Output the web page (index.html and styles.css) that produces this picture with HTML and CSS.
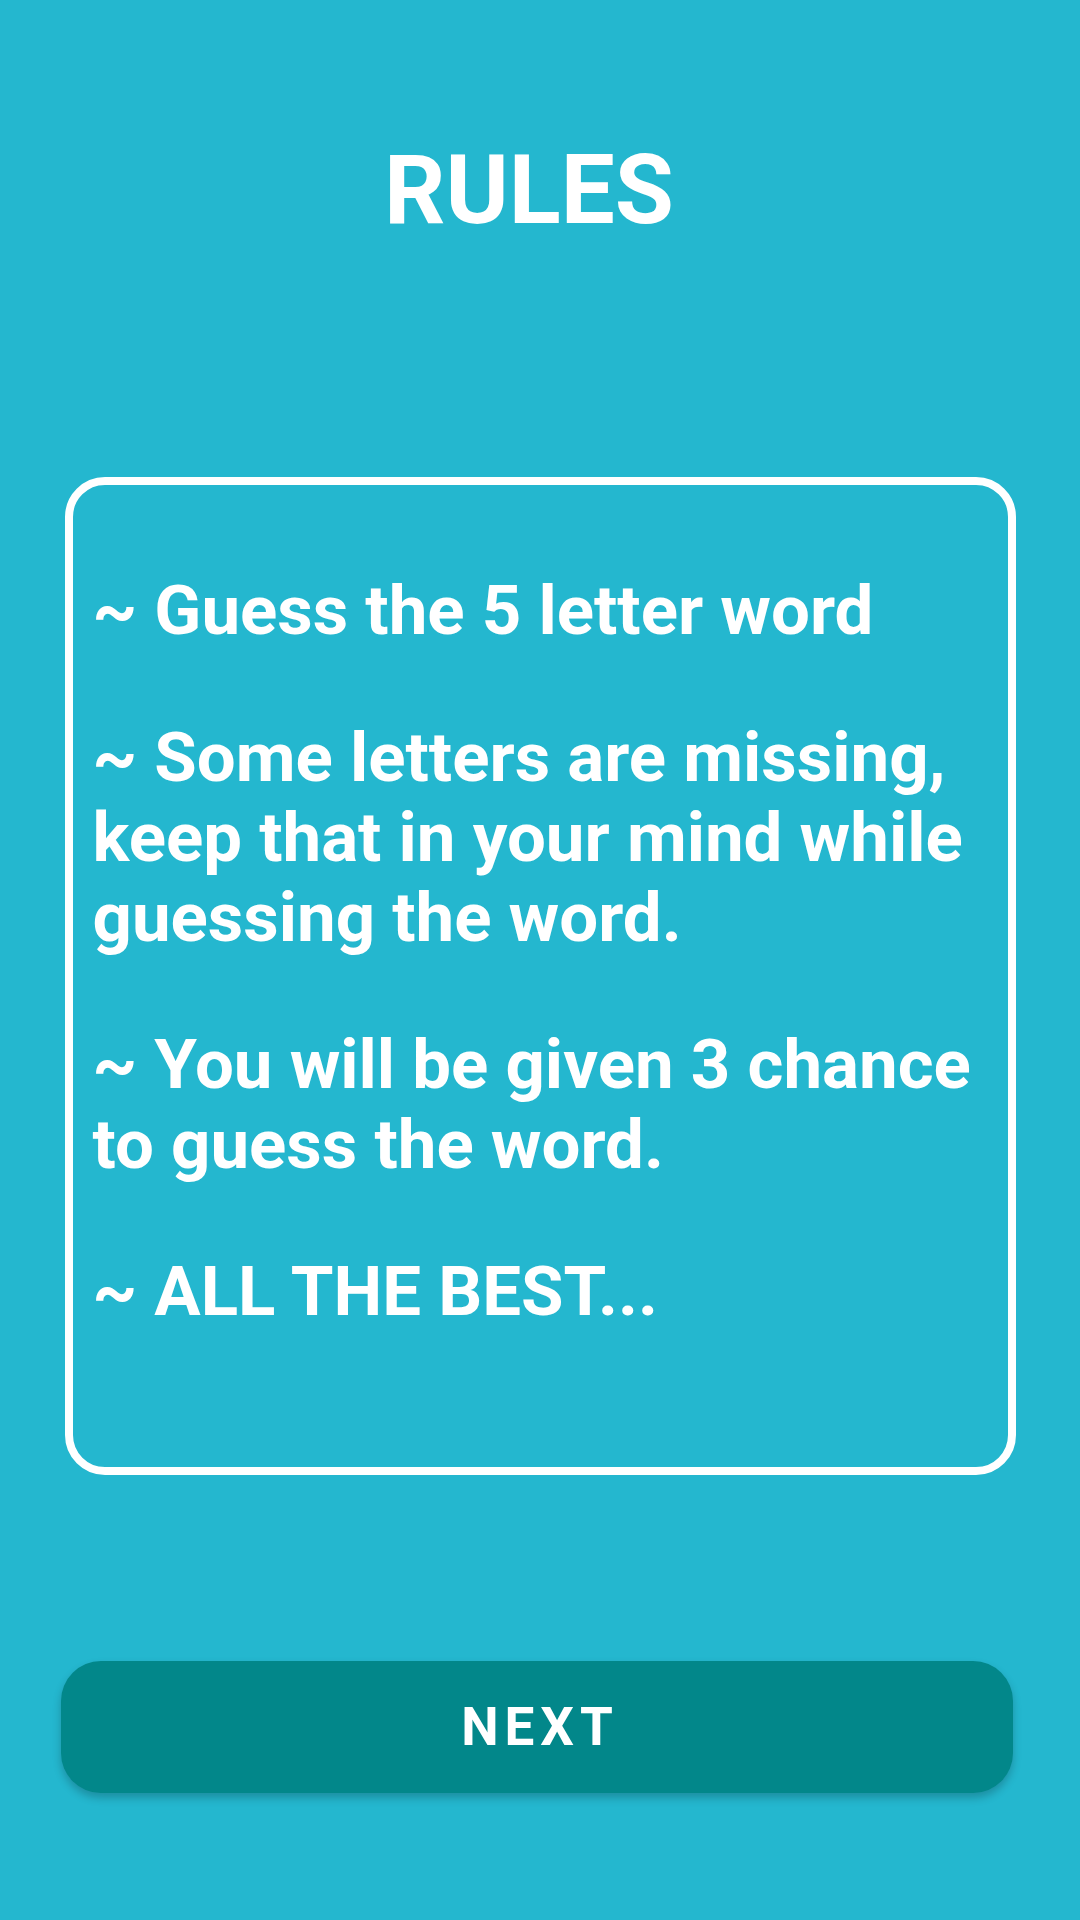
FILE: index.html
```html
<!DOCTYPE html>
<html>
<head>
<meta charset="utf-8">
<link rel="stylesheet" href="styles.css">
</head>
<body>
<div class="screen">
  <h1 class="title">RULES</h1>
  <div class="rules-box">
    <p class="rule">~ Guess the 5 letter word</p>
    <p class="rule">~ Some letters are missing, keep that in your mind while guessing the word.</p>
    <p class="rule">~ You will be given 3 chance to guess the word.</p>
    <p class="rule">~ ALL THE BEST...</p>
  </div>
  <button class="next-btn">NEXT</button>
</div>
</body>
</html>
```

FILE: styles.css
```css
html, body {
  margin: 0;
  padding: 0;
}
body {
  background: #24b7cf;
  font-family: Roboto, "Liberation Sans", sans-serif;
  color: #ffffff;
}
.screen {
  width: 1080px;
  height: 1920px;
  display: flex;
  flex-direction: column;
  align-items: center;
  box-sizing: border-box;
}
.title {
  margin: 0;
  padding-top: 134px;
  padding-right: 22px;
  font-size: 96px;
  font-weight: 700;
  line-height: 112px;
  height: 112px;
}
.rules-box {
  margin-top: 231px;
  width: 951px;
  height: 998px;
  box-sizing: border-box;
  border: 8px solid #ffffff;
  border-radius: 40px;
  padding: 86px 12px 0 20px;
}
.rule {
  margin: 0 0 67px 0;
  font-size: 69px;
  font-weight: 700;
  line-height: 80px;
}
.next-btn {
  margin-top: 186px;
  margin-right: 6px;
  width: 952px;
  height: 132px;
  border: none;
  border-radius: 40px;
  background: #02878a;
  color: #ffffff;
  font-family: Roboto, "Liberation Sans", sans-serif;
  font-size: 53px;
  font-weight: 700;
  letter-spacing: 6px;
  text-indent: 6px;
  box-shadow: 0 5px 8px rgba(0, 0, 0, 0.22);
  padding: 0;
}
```
